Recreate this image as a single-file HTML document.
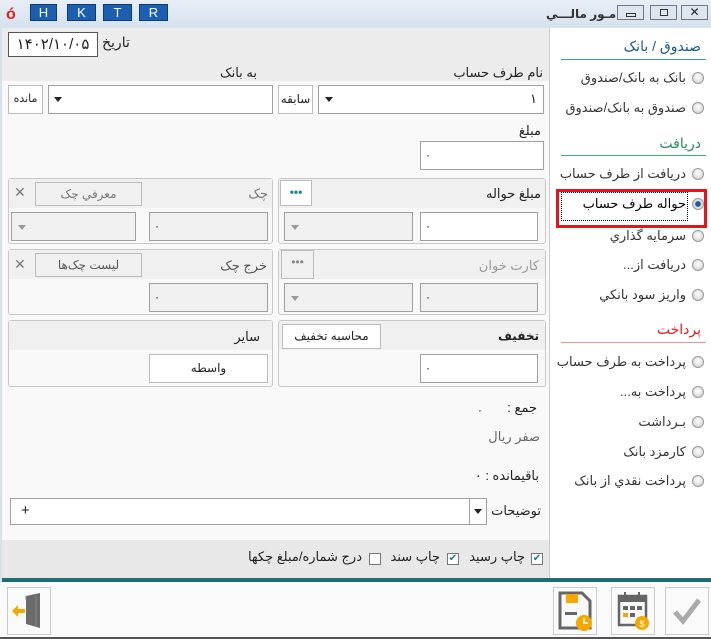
<!DOCTYPE html>
<html><head><meta charset="utf-8"><style>
*{box-sizing:border-box;margin:0;padding:0}
body{width:711px;height:639px;overflow:hidden;background:#fff;font-family:"Liberation Sans","DejaVu Sans",sans-serif;font-size:13px;color:#222;position:relative}
.a{position:absolute}
.t{position:absolute;white-space:nowrap;direction:rtl}
.box{position:absolute;border:1px solid #a0a0a0;background:#fff}
.g{background:#f0f0f0}
.btn{position:absolute;border:1px solid #bcbcbc;background:#fff;text-align:center;font-size:12px;line-height:22px;direction:rtl}
.grp{position:absolute;border:1px solid #c8c8c8;border-radius:3px;background:#f9f9f9}
.hd{position:absolute;left:0;right:0;top:0;height:29px;background:#f0f0f0}
.arr{position:absolute;width:0;height:0;border-left:4px solid transparent;border-right:4px solid transparent;border-top:5px solid #222}
.garr{border-top-color:#999}
.rad{position:absolute;width:12px;height:12px;border-radius:50%;border:1px solid #999;background:radial-gradient(circle at 50% 40%,#fff,#ccc)}
.rt{position:absolute;right:25px;white-space:nowrap;direction:rtl;font-size:13px;color:#333}
.cb{position:absolute;width:12px;height:12px;border:1px solid #777;background:#fff;font-size:10px;line-height:10px;text-align:center;color:#1a7a8a}
.fb{position:absolute;width:44px;height:48px;border:1px solid #ccc;background:#fafafa}
.zero{position:absolute;font-size:11px}
</style></head><body>
<div class="a" style="left:0;top:0;width:711px;height:28px;background:linear-gradient(#e8eef6,#d6e1ee)"></div>
<div class="a" style="left:6px;top:6px;color:#e02020;font-weight:bold;font-size:16px">ó</div>
<div class="a" style="left:30px;top:4px;width:27px;height:17px;background:#1c5fb0;border:1px solid #0a3d80;color:#fff;text-align:center;line-height:15px;font-size:13px">H</div>
<div class="a" style="left:67px;top:4px;width:29px;height:17px;background:#1c5fb0;border:1px solid #0a3d80;color:#fff;text-align:center;line-height:15px;font-size:13px">K</div>
<div class="a" style="left:103px;top:4px;width:29px;height:17px;background:#1c5fb0;border:1px solid #0a3d80;color:#fff;text-align:center;line-height:15px;font-size:13px">T</div>
<div class="a" style="left:139px;top:4px;width:29px;height:17px;background:#1c5fb0;border:1px solid #0a3d80;color:#fff;text-align:center;line-height:15px;font-size:13px">R</div>
<div class="t" style="left:546px;top:7px;font-size:12px;font-weight:bold;color:#333">امـور مالـــي</div>
<div class="a" style="left:617px;top:5px;width:27px;height:15px;border:1px solid #777;background:#dde5ee"><div class="a" style="left:8px;top:7px;width:10px;height:4px;border:1px solid #333"></div></div>
<div class="a" style="left:650px;top:5px;width:27px;height:15px;border:1px solid #777;background:#dde5ee"><div class="a" style="left:9px;top:3px;width:8px;height:7px;border:1px solid #333"></div></div>
<div class="a" style="left:681px;top:5px;width:27px;height:15px;border:1px solid #777;background:#dde5ee;text-align:center;line-height:13px;font-size:12px">✕</div>
<div class="a" style="left:0;top:28px;width:550px;height:554px;background:#f9f9f9;border-left:2px solid #d6e1ee;border-right:1px solid #ccc"></div>
<div class="a" style="left:2px;top:28px;width:547px;height:53px;background:#ececec"></div>
<div class="box" style="left:8px;top:32px;width:90px;height:25px;border-color:#555;font-size:15px;line-height:23px;text-align:center">۱۴۰۲/۱۰/۰۵</div>
<div class="t" style="left:102px;top:34px;font-size:14px">تاریخ</div>
<div class="t" style="right:168px;top:65px">نام طرف حساب</div>
<div class="t" style="right:454px;top:65px">به بانک</div>
<div class="box" style="left:318px;top:85px;width:226px;height:29px"><span class="a" style="right:6px;top:5px">۱</span><div class="arr" style="left:6px;top:11px"></div></div>
<div class="btn" style="left:278px;top:85px;width:35px;height:29px;line-height:27px">سابقه</div>
<div class="box" style="left:48px;top:85px;width:225px;height:29px"><div class="arr" style="left:5px;top:11px"></div></div>
<div class="btn" style="left:8px;top:85px;width:35px;height:29px;line-height:27px;font-size:11px">مانده</div>
<div class="t" style="right:170px;top:123px">مبلغ</div>
<div class="box" style="left:420px;top:141px;width:124px;height:29px"><span class="zero" style="left:4px;top:7px">۰</span></div>
<div class="grp" style="left:278px;top:178px;width:268px;height:66px"><div class="hd"></div></div>
<div class="t" style="right:170px;top:186px">مبلغ حواله</div>
<div class="btn" style="left:280px;top:180px;width:32px;height:26px;color:#1a8a9a;font-weight:bold">•••</div>
<div class="box g" style="left:284px;top:212px;width:129px;height:29px"><div class="arr garr" style="left:6px;top:12px"></div></div>
<div class="box" style="left:420px;top:212px;width:118px;height:29px"><span class="zero" style="left:4px;top:7px">۰</span></div>
<div class="grp" style="left:8px;top:178px;width:265px;height:66px"><div class="hd"></div></div>
<div class="t" style="right:443px;top:186px;color:#777">چک</div>
<div class="btn" style="left:35px;top:182px;width:107px;height:24px;background:#f0f0f0;color:#777">معرفي چک</div>
<div class="t" style="left:14px;top:184px;color:#777;font-size:14px">✕</div>
<div class="box g" style="left:149px;top:212px;width:119px;height:29px"><span class="zero" style="left:4px;top:7px">۰</span></div>
<div class="box g" style="left:11px;top:212px;width:125px;height:29px"><div class="arr garr" style="left:6px;top:12px"></div></div>
<div class="grp" style="left:278px;top:249px;width:268px;height:66px"><div class="hd"></div></div>
<div class="t" style="right:172px;top:258px;color:#999">کارت خوان</div>
<div class="btn" style="left:281px;top:250px;width:33px;height:29px;background:#f0f0f0;color:#888">•••</div>
<div class="box g" style="left:284px;top:283px;width:129px;height:29px"><div class="arr garr" style="left:6px;top:12px"></div></div>
<div class="box g" style="left:420px;top:283px;width:118px;height:29px"><span class="zero" style="left:4px;top:7px">۰</span></div>
<div class="grp" style="left:8px;top:249px;width:265px;height:66px"><div class="hd"></div></div>
<div class="t" style="right:444px;top:258px;color:#555">خرج چک</div>
<div class="btn" style="left:35px;top:253px;width:107px;height:24px;background:#f0f0f0;color:#555">لیست چک‌ها</div>
<div class="t" style="left:14px;top:256px;color:#777;font-size:14px">✕</div>
<div class="box g" style="left:149px;top:283px;width:119px;height:29px"><span class="zero" style="left:4px;top:7px">۰</span></div>
<div class="grp" style="left:278px;top:320px;width:268px;height:67px"><div class="hd"></div></div>
<div class="t" style="right:172px;top:329px;font-weight:bold;font-size:12px">تخفیف</div>
<div class="btn" style="left:282px;top:324px;width:99px;height:25px;font-size:12px">محاسبه تخفیف</div>
<div class="box" style="left:420px;top:354px;width:118px;height:29px"><span class="zero" style="left:4px;top:7px">۰</span></div>
<div class="grp" style="left:8px;top:320px;width:265px;height:67px"><div class="hd"></div></div>
<div class="t" style="right:451px;top:329px">سایر</div>
<div class="btn" style="left:149px;top:354px;width:119px;height:29px;line-height:27px">واسطه</div>
<div class="t" style="right:174px;top:400px">جمع :</div>
<div class="zero" style="left:477px;top:404px">۰</div>
<div class="t" style="right:171px;top:429px;color:#666">صفر ریال</div>
<div class="t" style="right:172px;top:468px">باقیمانده : ۰</div>
<div class="box" style="left:10px;top:498px;width:477px;height:27px"><div class="a" style="left:458px;top:0;width:1px;height:25px;background:#a0a0a0"></div><div class="arr" style="left:463px;top:10px"></div><span class="a" style="left:10px;top:3px;font-size:15px">+</span></div>
<div class="t" style="right:170px;top:503px">توضیحات</div>
<div class="a" style="left:2px;top:540px;width:547px;height:38px;background:#e8e8e8"></div>
<div class="cb" style="left:531px;top:553px">✔</div>
<div class="t" style="right:186px;top:549px">چاپ رسید</div>
<div class="cb" style="left:447px;top:553px">✔</div>
<div class="t" style="right:271px;top:549px">چاپ سند</div>
<div class="cb" style="left:369px;top:553px"></div>
<div class="t" style="right:349px;top:549px">درج شماره/مبلغ چکها</div>
<div class="a" style="left:2px;top:578px;width:709px;height:4px;background:#1c6e70"></div>
<div class="a" style="left:0;top:582px;width:711px;height:55px;background:#fafafa"></div>
<div class="a" style="left:0;top:637px;width:711px;height:2px;background:#555"></div>
<div class="fb" style="left:7px;top:587px"><svg width="42" height="46"><path d="M18 8 L32 5 L32 40 L18 36 Z" fill="#6b6b6b"/><path d="M18 8 L18 12 M28 8 L28 38" stroke="#888"/><path d="M4 23 L10 17 L10 21 L17 21 L17 25 L10 25 L10 29 Z" fill="#f5a800"/></svg></div>
<div class="fb" style="left:553px;top:587px"><svg width="42" height="46"><path d="M6 5 H28 L36 13 V40 H6 Z" fill="none" stroke="#666" stroke-width="3"/><rect x="12" y="6" width="12" height="9" fill="#f5a800"/><rect x="11" y="24" width="12" height="3" fill="#666"/><circle cx="30" cy="35" r="8" fill="#f5a800"/><path d="M30 30 V35 H34" stroke="#fff" stroke-width="1.5" fill="none"/></svg></div>
<div class="fb" style="left:611px;top:587px"><svg width="42" height="46"><rect x="7" y="8" width="27" height="29" fill="none" stroke="#666" stroke-width="2.5"/><rect x="7" y="8" width="27" height="6" fill="#666"/><path d="M13 4 V11 M27 4 V11" stroke="#666" stroke-width="2"/><g fill="#666"><rect x="11" y="18" width="5" height="4"/><rect x="18" y="18" width="5" height="4"/><rect x="25" y="18" width="5" height="4"/><rect x="18" y="25" width="5" height="4"/></g><rect x="11" y="25" width="5" height="4" fill="#f5a800"/><circle cx="30" cy="35" r="7" fill="#f5a800"/><text x="30" y="39" font-size="9" text-anchor="middle" fill="#fff" font-family="Liberation Sans">$</text></svg></div>
<div class="fb" style="left:665px;top:587px"><svg width="42" height="46"><path d="M9 24 L17 33 L33 12" stroke="#aaa" stroke-width="5" fill="none"/></svg></div>
<div class="t" style="right:10px;top:38px;color:#1a5a7a;font-size:14px">صندوق / بانک</div>
<div class="a" style="left:561px;top:59px;width:145px;height:1px;background:#2aa0c0"></div>
<div class="rad" style="left:692px;top:72px"></div><div class="rt" style="top:70px">بانک به بانک/صندوق</div>
<div class="rad" style="left:692px;top:102px"></div><div class="rt" style="top:100px">صندوق به بانک/صندوق</div>
<div class="t" style="right:10px;top:135px;color:#2a8a5a;font-size:14px">دریافت</div>
<div class="a" style="left:561px;top:155px;width:145px;height:1px;background:#3ab070"></div>
<div class="rad" style="left:692px;top:168px"></div><div class="rt" style="top:166px">دریافت از طرف حساب</div>
<div class="a" style="left:556px;top:189px;width:151px;height:39px;border:3px solid #e8141c"></div>
<div class="a" style="left:561px;top:192px;width:127px;height:29px;border:1px dotted #000"></div>
<div class="rad" style="left:692px;top:198px;background:radial-gradient(circle,#1e5a9a 35%,#ddd 45%)"></div><div class="rt" style="top:196px;color:#000">حواله طرف حساب</div>
<div class="rad" style="left:692px;top:230px"></div><div class="rt" style="top:228px">سرمایه گذاري</div>
<div class="rad" style="left:692px;top:259px"></div><div class="rt" style="top:257px">دریافت از...</div>
<div class="rad" style="left:692px;top:289px"></div><div class="rt" style="top:287px">واریز سود بانکي</div>
<div class="t" style="right:10px;top:321px;color:#e02020;font-size:14px">پرداخت</div>
<div class="a" style="left:561px;top:342px;width:145px;height:1px;background:#f09090"></div>
<div class="rad" style="left:692px;top:356px"></div><div class="rt" style="top:354px">پرداخت به طرف حساب</div>
<div class="rad" style="left:692px;top:386px"></div><div class="rt" style="top:384px">پرداخت به...</div>
<div class="rad" style="left:692px;top:416px"></div><div class="rt" style="top:414px">بـرداشت</div>
<div class="rad" style="left:692px;top:446px"></div><div class="rt" style="top:444px">کارمزد بانک</div>
<div class="rad" style="left:692px;top:475px"></div><div class="rt" style="top:473px">پرداخت نقدي از بانک</div>
</body></html>
